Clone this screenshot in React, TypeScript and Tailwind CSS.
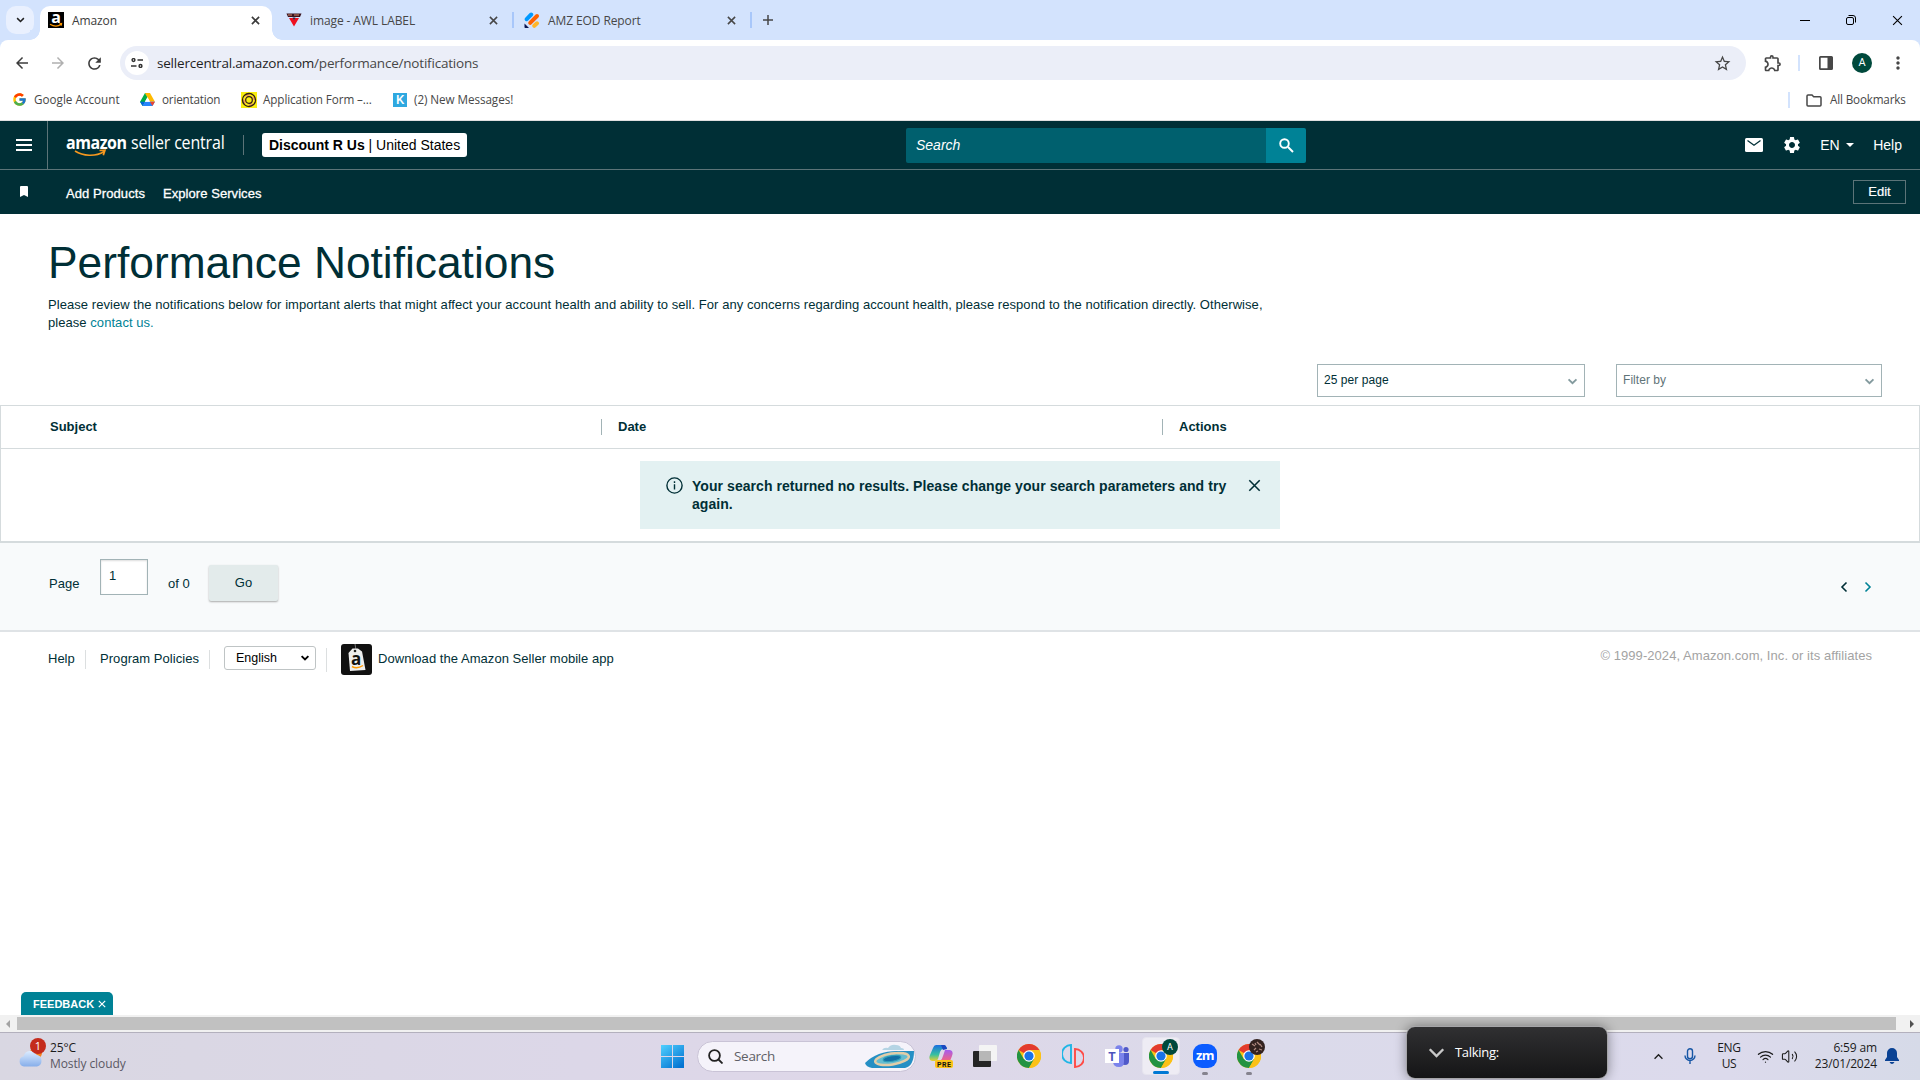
import React from "react";
import { FcGoogle } from "react-icons/fc";
import {
    MdArrowBack,
    MdArrowForward,
    MdRefresh,
    MdStarBorder,
    MdMoreVert,
    MdOutlineExtension,
    MdSettings,
} from "react-icons/md";
import { Volume2, Wifi } from "lucide-react";

interface TabItem {
    title: string;
    icon: React.ReactNode;
    className: string;
}

interface BookmarkItem {
    label: string;
    icon: React.ReactNode;
    className: string;
    textClass: string;
}

const Cross: React.FC<{ className?: string; width?: number }> = ({ className, width = 1.5 }) => (
    <svg viewBox="0 0 10 10" className={className} fill="none" stroke="currentColor" strokeWidth={width}>
        <path d="M1 1 9 9M9 1 1 9" />
    </svg>
);

const Chevron: React.FC<{ className?: string; width?: number }> = ({ className, width = 2 }) => (
    <svg viewBox="0 0 12 8" className={className} fill="none" stroke="currentColor" strokeWidth={width}>
        <path d="M1.5 1.5 6 6 10.5 1.5" />
    </svg>
);

const AmazonIcon = () => (
    <span className="relative flex h-4 w-4 justify-center bg-black font-['Open_Sans',sans-serif] text-[16px] leading-[10px] font-bold text-white">
        a
        <svg viewBox="0 0 16 16" className="absolute inset-0" fill="none" stroke="#f90" strokeWidth="1.3">
            <path d="M2 12.2c4 2.4 8 2.2 11 .3M11.5 11.8l2-.2-.3 2" />
        </svg>
    </span>
);

const AwlIcon = () => (
    <svg viewBox="0 0 16 16" className="h-4 w-4">
        <path d="M.5 1.5h15L14 5H2z" fill="#3a1420" />
        <path d="M2 3h4M8 3h5" stroke="#d98a6a" strokeWidth="1" />
        <path d="M3 6h4l1 2 1-2h4L8 14.5z" fill="#ef1020" />
        <path d="M6.5 5.5h3L8 8.5z" fill="#30203a" />
    </svg>
);

const JotformIcon = () => (
    <svg viewBox="0 0 16 16" className="h-4 w-4" strokeLinecap="round" strokeWidth="4">
        <path d="M2.7 7.2 7.2 2.5" stroke="#0099ff" />
        <path d="M6.2 10.8 13 4" stroke="#ff6100" />
        <path d="M10.3 13.8 13 11.3" stroke="#ffb629" />
        <path d="M.5 11.5v3.7q0 .8.8.8h3.7z" fill="#0a1551" />
    </svg>
);

const DriveIcon = () => (
    <svg viewBox="0 0 16 14" className="h-[13px] w-[15px]">
        <path d="M5.3 0h5.4L8 4.7z" fill="#188038" />
        <path d="M5.3 0 0 9.3 2.7 14 8 4.7z" fill="#00ac47" />
        <path d="M10.7 0 16 9.3h-5.4L5.3 0z" fill="#ffba00" />
        <path d="M5.3 9.3H16L13.3 14H2.7z" fill="#2684fc" />
        <path d="M10.7 9.3H16L13.3 14z" fill="#ea4335" />
        <path d="M5.3 9.3 2.7 14 0 9.3z" fill="#0066da" />
        <path d="M8 4.7 5.3 9.3h5.3z" fill="#fff" />
    </svg>
);

const FormIcon = () => (
    <svg viewBox="0 0 16 16" className="h-4 w-4">
        <path d="M0 0h16v16H0z" fill="#f8ee10" />
        <circle cx="8" cy="8" r="6.5" fill="#f0a850" stroke="#302010" strokeWidth="1.4" />
        <circle cx="8" cy="8" r="5" fill="none" stroke="#f8ee10" strokeWidth="1.6" strokeDasharray="4 3.85" />
        <circle cx="8" cy="8" r="3.3" fill="#f8ee10" stroke="#302010" strokeWidth="1.2" />
    </svg>
);

const ChromeIcon: React.FC<{ className?: string }> = ({ className = "h-6 w-6" }) => (
    <svg viewBox="0 0 24 24" className={className}>
        <circle cx="12" cy="12" r="12" fill="#fbc116" />
        <path d="M12 12 1.6 6A12 12 0 0 1 22.4 6z" fill="#e33b2e" />
        <path d="M12 12 6.8 15 1.6 6A12 12 0 0 0 12 24l5.2-9z" fill="#229342" />
        <path d="M12 6h10.4A12 12 0 0 1 12 24l5.2-9z" fill="#fbc116" />
        <circle cx="12" cy="12" r="5.8" fill="#fff" />
        <circle cx="12" cy="12" r="4.6" fill="#1a73e8" />
    </svg>
);

const tabs: TabItem[] = [
    { title: "image - AWL LABEL", icon: <AwlIcon />, className: "w-[241px] pl-[14px] pr-[14px]" },
    { title: "AMZ EOD Report", icon: <JotformIcon />, className: "w-[238px] pl-[11px] pr-[14px]" },
];

const bookmarks: BookmarkItem[] = [
    {
        label: "Google Account",
        icon: <FcGoogle className="h-[15px] w-[15px]" />,
        className: "w-[128px] gap-[7px]",
        textClass: "",
    },
    {
        label: "orientation",
        icon: <DriveIcon />,
        className: "w-[101px] gap-[7px]",
        textClass: "tracking-[-0.2px]",
    },
    {
        label: "Application Form –...",
        icon: <FormIcon />,
        className: "w-[152px] gap-[6px]",
        textClass: "tracking-[-0.1px]",
    },
    {
        label: "(2) New Messages!",
        icon: (
            <span className="flex h-[14px] w-[14px] items-center justify-center bg-[#2fa8e0] font-['Roboto',sans-serif] text-[13px] font-medium text-white">
                K
            </span>
        ),
        className: "gap-[7px]",
        textClass: "tracking-[-0.07px]",
    },
];

const TabStrip = () => (
    <div className="flex h-10 bg-[#d3e3fd] text-[12px] text-[#474747]">
        <div className="mt-[6px] ml-[6px] flex h-7 w-7 items-center justify-center rounded-[10px] bg-[#e9f0fe] text-[#1f1f1f]">
            <Chevron className="h-[6px] w-[9px]" />
        </div>
        <div className="relative mt-[6px] ml-[6px] flex h-[34px] w-[232px] items-center rounded-t-[10px] bg-white pb-[6px] pl-2 text-[#3c3c3c]">
            <AmazonIcon />
            <span className="ml-2 flex-1 pt-[2px] tracking-[-0.1px]">Amazon</span>
            <Cross className="mr-[12px] h-[9px] w-[9px]" width={1.8} />
            <span className="absolute bottom-0 -left-[10px] h-[10px] w-[10px] bg-[radial-gradient(circle_at_0_0,#d3e3fd_9.5px,white_10px)]" />
            <span className="absolute -right-[10px] bottom-0 h-[10px] w-[10px] bg-[radial-gradient(circle_at_100%_0,#d3e3fd_9.5px,white_10px)]" />
        </div>
        {tabs.map((tab) => (
            <div key={tab.title} className={`flex h-10 items-center ${tab.className}`}>
                {tab.icon}
                <span className="ml-2 flex-1 pt-[2px] tracking-[-0.1px]">{tab.title}</span>
                <Cross className="h-[9px] w-[9px]" width={1.7} />
                <span className="-mr-[15px] ml-[14px] h-4 w-[2px] bg-[#a8c7fa]" />
            </div>
        ))}
        <div className="flex h-10 w-8 items-center justify-center">
            <svg viewBox="0 0 10 10" className="ml-[2px] h-[10px] w-[10px]" stroke="currentColor" strokeWidth="1.5">
                <path d="M5 0v10M0 5h10" />
            </svg>
        </div>
        <div className="flex flex-1 items-center justify-end gap-[36px] pr-[17px] text-black">
            <span className="h-px w-[10px] bg-black" />
            <svg viewBox="0 0 10 10" className="h-[10px] w-[10px]" fill="none" stroke="currentColor">
                <rect x=".5" y="2.5" width="7" height="7" rx="1.5" />
                <path d="M2.5.5H7A2.5 2.5 0 0 1 9.5 3v4.5" />
            </svg>
            <Cross className="h-[11px] w-[11px]" width={1} />
        </div>
    </div>
);

const Toolbar = () => (
    <div className="bg-[#d3e3fd]">
        <div className="flex h-[41px] items-center rounded-t-[8px] bg-white pt-[5px] text-[#474747]">
            <MdArrowBack className="ml-[13px] h-[18px] w-[18px] text-[#3c3c3c]" />
            <MdArrowForward className="ml-[18px] h-[18px] w-[18px] text-[#b0b0b0]" />
            <MdRefresh className="ml-[18px] h-[19px] w-[19px] text-[#3c3c3c]" />
            <div className="ml-[16px] flex h-[34px] w-[1626px] items-center rounded-full bg-[#ebeef8] pl-[5px]">
                <span className="flex h-6 w-6 items-center justify-center rounded-full bg-white">
                    <svg viewBox="0 0 12 10" className="h-[10px] w-[12px]" fill="none" stroke="#333" strokeWidth="1.5">
                        <circle cx="2.5" cy="2" r="1.4" />
                        <path d="M6.5 2H12M0 8h5.5" />
                        <circle cx="9.5" cy="8" r="1.4" />
                    </svg>
                </span>
                <span className="ml-2 flex-1 text-[13.5px] tracking-[-0.2px]">
                    <span className="text-[#1f1f1f]">sellercentral.amazon.com</span>/performance/notifications
                </span>
                <MdStarBorder className="mr-[14px] h-[19px] w-[19px]" />
            </div>
            <MdOutlineExtension className="ml-[17px] h-[20px] w-[20px]" />
            <span className="ml-[15px] h-4 w-[2px] bg-[#d3e3fd]" />
            <svg viewBox="0 0 14 14" className="ml-[19px] h-[14px] w-[14px]">
                <path d="M0 1.5Q0 0 1.5 0h11Q14 0 14 1.5v11q0 1.5-1.5 1.5h-11Q0 14 0 12.5zM1.7 1.7v10.6h6.8V1.7z" fill="#474747" />
            </svg>
            <span className="ml-[19px] flex h-5 w-5 items-center justify-center rounded-full bg-[#00493c] font-['Roboto',sans-serif] text-[11px] text-white">
                A
            </span>
            <MdMoreVert className="ml-[16px] h-5 w-5" />
        </div>
    </div>
);

const Bookmarks = () => (
    <div className="flex h-10 items-center border-b border-[#e0e0e0] bg-white pb-px pl-[12px] text-[11.7px] text-[#474747]">
        {bookmarks.map((item) => (
            <div key={item.label} className={`flex items-center whitespace-nowrap ${item.className}`}>
                {item.icon}
                <span className={item.textClass}>{item.label}</span>
            </div>
        ))}
        <span className="ml-auto h-4 w-[2px] bg-[#d3e3fd]" />
        <svg viewBox="0 0 16 13" className="ml-[16px] h-[13px] w-[16px]" fill="none" stroke="#474747" strokeWidth="1.5">
            <path d="M1 2q0-1 1-1h4l1.7 1.7H14q1 0 1 1V11q0 1-1 1H2q-1 0-1-1z" />
        </svg>
        <span className="ml-2 w-[90px] tracking-[-0.17px]">All Bookmarks</span>
    </div>
);

const SellerHeader = () => (
    <header className="bg-[#002f36] text-[14px] text-white">
        <div className="flex h-[49px] items-center border-b border-[#5c7478]">
            <div className="flex h-12 w-12 flex-col justify-center gap-[2px] border-r border-[#5c7478] pl-4">
                <span className="h-[2px] w-4 bg-white" />
                <span className="my-px h-[2px] w-4 bg-white" />
                <span className="h-[2px] w-4 bg-white" />
            </div>
            <div className="relative ml-[18px] flex h-12 w-[177px] items-center font-['Open_Sans',sans-serif] text-[18px]">
                <span className="-mt-[5px] w-[65px] origin-left scale-x-[0.889] font-bold tracking-[-0.5px]">amazon</span>
                <span className="-mt-[5px] origin-left scale-x-[0.889] tracking-[-0.2px] whitespace-nowrap">
                    seller central
                </span>
                <svg viewBox="0 0 34 8" className="absolute top-[28px] left-[8px] h-[8px] w-[34px]" fill="none" stroke="#f7981f" strokeWidth="1.7">
                    <path d="M1 2c8 5 20 6 29 .8M25.5 1.5l5.500-.3-1.700 5" />
                </svg>
            </div>
            <span className="h-5 w-px bg-[#5c7478]" />
            <div className="ml-[18px] flex h-6 w-[205px] items-center rounded-[3px] bg-white pl-[7px] whitespace-pre text-black">
                <b>Discount R Us</b> | United States
            </div>
            <div className="ml-[439px] flex h-[35px] w-[400px]">
                <span className="flex w-[360px] items-center rounded-l-[2px] bg-[#00606e] pl-[10px] italic">Search</span>
                <span className="flex w-[40px] items-center justify-center rounded-r-[2px] bg-[#008296]">
                    <svg viewBox="0 0 15 15" className="h-[15px] w-[15px]" fill="none" stroke="#fff" strokeWidth="1.9">
                        <circle cx="5.5" cy="5.5" r="4.3" />
                        <path d="m9 9 5 5" />
                    </svg>
                </span>
            </div>
            <div className="ml-auto flex items-center pr-[18px]">
                <svg viewBox="0 0 18 14" className="h-[14px] w-[18px]">
                    <rect width="18" height="14" rx="1.5" fill="#fff" />
                    <path d="m2.5 2.5 6.5 4.7 6.5-4.7" fill="none" stroke="#002f36" strokeWidth="1.3" />
                </svg>
                <MdSettings className="ml-[19px] h-5 w-5" />
                <span className="ml-[18px] w-[26px]">EN</span>
                <svg viewBox="0 0 8 4" className="h-1 w-2" fill="#fff">
                    <path d="M0 0h8L4 4z" />
                </svg>
                <span className="ml-[19px]">Help</span>
            </div>
        </div>
        <div className="flex h-[44px] items-center pr-[14px] text-[13px]">
            <svg viewBox="0 0 8 11" className="-mt-[1px] ml-5 h-[11px] w-2" fill="#fff">
                <path d="M0 1q0-1 1-1h6q1 0 1 1v10L4 9 0 11z" />
            </svg>
            <span className="ml-[38px] w-[97px] pt-[3px] tracking-[0.08px] [-webkit-text-stroke:0.3px]">Add Products</span>
            <span className="pt-[3px] tracking-[0.06px] [-webkit-text-stroke:0.3px]">Explore Services</span>
            <span className="ml-auto flex h-6 w-[53px] items-center justify-center border border-[#5c7478] pb-px [-webkit-text-stroke:0.2px]">
                Edit
            </span>
        </div>
    </header>
);

const SelectBox: React.FC<{ label: string; className: string }> = ({ label, className }) => (
    <div className={`flex h-[33px] items-center justify-between border border-[#a2b3b6] bg-white pr-[6px] pl-[6px] text-[12px] ${className}`}>
        <span className="-mt-[2px] tracking-[0.05px]">{label}</span>
        <Chevron className="mt-[2px] h-[7px] w-[11px] text-[#839a9e]" width={2.1} />
    </div>
);

const Notifications = () => (
    <main className="bg-white text-[13px] text-[#002f36]">
        <div className="h-[150px] pt-[22px] pl-12">
            <h1 className="text-[44.3px] leading-[54px]">Performance Notifications</h1>
            <p className="mt-[6px] leading-[18px] tracking-[0.055px] whitespace-nowrap">
                Please review the notifications below for important alerts that might affect your account health and
                ability to sell. For any concerns regarding account health, please respond to the notification directly.
                Otherwise,
                <br />
                please <a className="text-[#008296]">contact us.</a>
            </p>
        </div>
        <div className="flex h-[41px] justify-end gap-[31px] pr-[38px]">
            <SelectBox label="25 per page" className="w-[268px]" />
            <SelectBox label="Filter by" className="w-[266px] text-[#5f7478]" />
        </div>
        <div className="h-[138px] border-x border-t border-b-2 border-[#d5dbdd]">
            <div className="flex h-[43px] items-center border-b border-[#d5dbdd] font-bold">
                <span className="w-[600px] pl-[49px]">Subject</span>
                <span className="h-4 w-px bg-[#a2b3b6]" />
                <span className="w-[560px] pl-4">Date</span>
                <span className="h-4 w-px bg-[#a2b3b6]" />
                <span className="pl-4">Actions</span>
            </div>
            <div className="mx-auto mt-3 flex h-[68px] w-[640px] bg-[#e3f1f2] pt-4 text-[14px] leading-[18px] font-bold">
                <svg viewBox="0 0 17 17" className="ml-[26px] h-[17px] w-[17px]" fill="none" stroke="currentColor" strokeWidth="1.4">
                    <circle cx="8.5" cy="8.5" r="7.6" />
                    <path d="M8.5 7.3v5.2M8.5 4.3v1.6" />
                </svg>
                <p className="ml-[9px] w-[546px] tracking-[0.06px] whitespace-nowrap">
                    Your search returned no results. Please change your search parameters and try
                    <br />
                    again.
                </p>
                <Cross className="mt-[2px] ml-[10px] h-[13px] w-[13px]" width={1.2} />
            </div>
        </div>
        <div className="flex h-[89px] border-b-2 border-[#dfe3e6] bg-[#f8fafb]">
            <span className="mt-[31px] ml-[49px] w-[51px]">Page</span>
            <span className="mt-4 h-9 w-12 border border-[#a2b3b6] bg-white pt-[6px] pl-2 shadow-[inset_0_1px_2px_#ddd]">1</span>
            <span className="mt-[31px] ml-5 w-[41px]">of 0</span>
            <span className="mt-[22px] flex h-9 w-[69px] items-center justify-center rounded-[2px] bg-[#e3ebeb] shadow-[0_1px_2px_#aaa]">
                Go
            </span>
            <span className="mt-[40px] mr-[46px] ml-auto flex h-[8px] gap-[12px]">
                <Chevron className="h-[8px] w-3 rotate-90 text-[#002f36]" width={1.6} />
                <Chevron className="h-[8px] w-3 -rotate-90 text-[#008296]" width={1.6} />
            </span>
        </div>
    </main>
);

const Footer = () => (
    <footer className="flex h-[383px] items-start bg-white pt-3 text-[13px] text-[#002f36]">
        <div className="flex h-[31px] items-center pl-12">
            <span className="-mt-[2px] w-[37px]">Help</span>
            <span className="h-[19px] w-px bg-[#dcdfe0]" />
            <span className="-mt-[2px] w-[123px] pl-[14px] tracking-[0.05px] whitespace-nowrap">Program Policies</span>
            <span className="h-[19px] w-px bg-[#dcdfe0]" />
            <span className="-mt-[3px] ml-[14px] flex h-6 w-[92px] items-center justify-between rounded-[3px] border border-[#bfc4c5] pr-[5px] pl-[11px] text-[12.5px] text-black">
                English
                <Chevron className="h-[6px] w-[10px]" width={2.5} />
            </span>
            <span className="ml-[10px] h-6 w-px bg-[#dcdfe0]" />
            <svg viewBox="0 0 31 31" className="ml-[14px] h-[31px] w-[31px]">
                <rect width="31" height="31" rx="3" fill="#111" />
                <path d="m14 0 1 6" stroke="#777" />
                <path d="m7.5 9 4-4.5h5.5l4 3L24.5 26l-15.5 1z" fill="#eee" />
                <circle cx="14" cy="7" r="1.3" fill="#222" />
                <text x="10" y="20.5" fontSize="17" fontWeight="bold" fill="#111" fontFamily="Open Sans, sans-serif">
                    a
                </text>
                <path d="M11 22.5q5 3 11-1" fill="none" stroke="#f90" strokeWidth="1.5" />
            </svg>
            <span className="-mt-[2px] ml-[6px] tracking-[0.045px]">Download the Amazon Seller mobile app</span>
        </div>
        <span className="mt-[2px] mr-12 ml-auto tracking-[0.06px] text-[#a3a3a3]">
            © 1999-2024, Amazon.com, Inc. or its affiliates
        </span>
    </footer>
);

const Scrollbar = () => (
    <div className="flex h-[17px] items-center bg-[#f1f1f1]">
        <svg viewBox="0 0 4 8" className="ml-[6px] h-2 w-1" fill="#a3a3a3">
            <path d="M4 0v8L0 4z" />
        </svg>
        <span className="ml-[7px] h-[13px] w-[1879px] bg-[#c1c1c1]" />
        <svg viewBox="0 0 4 8" className="ml-[14px] h-2 w-1" fill="#505050">
            <path d="M0 0v8l4-4z" />
        </svg>
    </div>
);

const Taskbar = () => (
    <div className="flex h-12 items-center border-t border-[#b3b0bd] bg-[linear-gradient(90deg,#d9d7e2_0%,#dcd7e8_30%,#ded7e8_45%,#dbdaea_65%,#dcdaec_90%,#d6dae8_100%)] pb-px text-[12px] leading-4 text-[#1b1b1b]">
        <div className="relative ml-[18px] h-10 w-8">
            <svg viewBox="0 0 28 30" className="mt-[4px] h-[30px] w-7">
                <defs>
                    <linearGradient id="cloud" x2="0" y2="1">
                        <stop stopColor="#dcecff" />
                        <stop offset="1" stopColor="#86aeea" />
                    </linearGradient>
                </defs>
                <circle cx="18" cy="13" r="6" fill="#f58220" />
                <path d="M6 26.5a5.2 5.2 0 0 1-.4-10.2 7 7 0 0 1 13-1.5 6 6 0 0 1 .4 11.700z" fill="url(#cloud)" />
            </svg>
            <span className="absolute top-[2px] left-[12px] flex h-4 w-4 items-center justify-center rounded-full bg-[#c42b1c] text-[11px] text-white">
                1
            </span>
        </div>
        <div className="w-[611px] pb-px tracking-[-0.1px]">
            <div>25°C</div>
            <div className="text-[#5a5864]">Mostly cloudy</div>
        </div>
        <svg viewBox="0 0 23 23" className="h-[23px] w-[23px]">
            <defs>
                <linearGradient id="win" gradientUnits="userSpaceOnUse" x2="18" y2="23">
                    <stop stopColor="#50d0ff" />
                    <stop offset="1" stopColor="#0474d2" />
                </linearGradient>
            </defs>
            <path d="M0 0h11v11H0zM12 0h11v11H12zM0 12h11v11H0zM12 12h11v11H12z" fill="url(#win)" />
        </svg>
        <div className="ml-[13px] flex h-[31px] w-[219px] items-center rounded-full border border-[#c9c3d6] bg-[#f5f3fa] pl-[10px]">
            <svg viewBox="0 0 15 15" className="h-[15px] w-[15px]" fill="none" stroke="#222" strokeWidth="1.8">
                <circle cx="6.5" cy="6.5" r="5.4" />
                <path d="m10.5 10.5 4 4" />
            </svg>
            <span className="ml-[11px] flex-1 text-[13.5px] tracking-[-0.3px] text-[#5f5f66]">Search</span>
            <svg viewBox="0 0 49 25" className="mr-[1px] h-[25px] w-[49px]">
                <path d="M17 6q2-3 6-2 3-4 8-3 4 0 5 3 3 0 3 2z" fill="#b4d4e4" />
                <path d="M0 19Q12 7 32 7h17q0 15-9 17H7q-6-1-7-5z" fill="#258fc4" />
                <ellipse cx="27" cy="15" rx="17" ry="5.5" fill="#66bdd0" stroke="#e2cda8" strokeWidth="2.5" transform="rotate(-9 27 15)" />
                <ellipse cx="27" cy="14.5" rx="9" ry="2.8" fill="#146fa4" stroke="#2f9cb8" transform="rotate(-9 27 14.5)" />
            </svg>
        </div>
        <svg viewBox="0 0 24 24" className="ml-[13px] h-6 w-6">
            <defs>
                <linearGradient id="cpl" x2="0" y2="1">
                    <stop stopColor="#1a6fe0" />
                    <stop offset=".6" stopColor="#37c0a0" />
                    <stop offset="1" stopColor="#e8d030" />
                </linearGradient>
                <linearGradient id="cpr" x2="0" y2="1">
                    <stop stopColor="#a45cf0" />
                    <stop offset="1" stopColor="#f5657c" />
                </linearGradient>
            </defs>
            <path d="M7 1h8q2 0 3 4h-4q-2 0-3 3l-2 7q-1 2-3 2H3q-4-1-2-6l3-7q1-3 3-3z" fill="url(#cpl)" />
            <path d="M12 1h3q2 0 3 4l-4 1z" fill="#1b48c0" />
            <path d="M16 6h5q4 1 2 6l-2 5h-10q2-1 3-5z" fill="url(#cpr)" />
            <rect x="6" y="16" width="18" height="8" rx="2" fill="#fcc419" />
            <text x="8" y="22.5" fontSize="7" fontWeight="bold" fill="#111" fontFamily="Roboto, sans-serif" textLength="14">
                PRE
            </text>
        </svg>
        <svg viewBox="0 0 24 22" className="ml-[20px] h-[22px] w-6">
            <rect y="6" width="18" height="16" rx="1" fill="#252525" />
            <rect x="6" width="18" height="16" rx="1" fill="#f4f4f4" />
            <path d="M6 6h12v10H6z" fill="#b7b7b7" />
        </svg>
        <ChromeIcon className="ml-5 h-6 w-6" />
        <svg viewBox="0 0 22 24" className="ml-[21px] h-6 w-[22px]" fill="none" strokeWidth="1.9">
            <path d="M9 1v18A9 9 0 0 1 9 1z" stroke="#1fb6e6" />
            <path d="M13 5v18a9 9 0 0 0 0-18z" stroke="#ff4b45" />
        </svg>
        <svg viewBox="0 0 25 23" className="ml-[21px] h-[23px] w-[25px]">
            <circle cx="14" cy="4" r="3.7" fill="#7b83eb" />
            <circle cx="21" cy="4.5" r="2.6" fill="#5059c9" />
            <path d="M15 8h9v8q0 4-4 4t-5-4z" fill="#5059c9" />
            <path d="M8 8h11v9q0 5-5 5-6 0-6-6z" fill="#7b83eb" />
            <path d="M0 4h14v14H0z" fill="#fff" />
            <text x="3.2" y="15.5" fontSize="12" fontWeight="bold" fill="#4b53bc" fontFamily="Roboto, sans-serif">
                T
            </text>
        </svg>
        <div className="relative ml-[12px] flex h-[38px] w-[38px] items-center justify-center rounded-[4px] border border-[#e6e4ee] bg-[#eeecf4]">
            <ChromeIcon />
            <span className="absolute top-[1px] left-[19px] flex h-4 w-4 items-center justify-center rounded-full bg-[#00493c] font-['Roboto',sans-serif] text-[9px] text-white">
                A
            </span>
            <span className="absolute bottom-0 left-[10px] h-[3px] w-4 rounded-full bg-[#0078d4]" />
        </div>
        <div className="relative ml-[13px] flex h-6 w-6 items-center justify-center rounded-[9px] bg-[#0b5cff] pb-[2px] font-['Open_Sans',sans-serif] text-[13px] font-bold tracking-[-0.5px] text-white">
            zm
            <span className="absolute -bottom-[7px] left-[9px] h-[3px] w-[6px] rounded-full bg-[#85838e]" />
        </div>
        <div className="relative ml-[20px] h-6 w-6">
            <ChromeIcon />
            <svg viewBox="0 0 16 16" className="absolute -top-[5px] left-[12px] h-4 w-4">
                <circle cx="8" cy="8" r="8" fill="#33221f" />
                <path d="M3 5l3 2M8 3l3 3M5 11l2-2M10 10l3 1M11 5l2 3M7 13l2-1M6 4l1 2" stroke="#b08a80" strokeWidth="1.2" />
            </svg>
            <span className="absolute -bottom-[7px] left-[9px] h-[3px] w-[6px] rounded-full bg-[#85838e]" />
        </div>
        <div className="flex flex-1 items-center justify-end pr-[21px]">
            <Chevron className="h-[7px] w-[11px] rotate-180" width={1.5} />
            <svg viewBox="0 0 12 16" className="ml-[20px] h-4 w-3" fill="none" stroke="#1756a5" strokeWidth="1.4">
                <rect x="3.5" y=".8" width="5" height="10" rx="2.5" />
                <path d="M1 7.5a5 5 0 0 0 10 0M6 12.5V16" />
            </svg>
            <div className="mr-[-1px] ml-[18px] w-[30px] text-center leading-4 tracking-[-0.3px]">
                <div>ENG</div>
                <div>US</div>
            </div>
            <Wifi className="ml-[14px] h-[17px] w-[17px]" strokeWidth={1.7} />
            <Volume2 className="ml-[7px] h-[17px] w-[17px]" strokeWidth={1.5} />
            <div className="ml-[11px] w-[68px] text-right tracking-[-0.15px]">
                <div>6:59 am</div>
                <div>23/01/2024</div>
            </div>
            <svg viewBox="0 0 14 16" className="ml-2 h-4 w-[14px]" fill="#0a4294">
                <path d="M7 0a5 5 0 0 1 5 5v4l2 3v1H0v-1l2-3V5a5 5 0 0 1 5-5zM4.5 14h5q-1 2-2.5 2t-2.5-2z" />
            </svg>
        </div>
    </div>
);

const App: React.FC = () => {
    return (
        <div className="relative flex h-[1080px] w-[1920px] flex-col overflow-hidden bg-white font-['Liberation_Sans',Arial,sans-serif]">
            <div className="font-['Open_Sans',sans-serif]">
                <TabStrip />
                <Toolbar />
                <Bookmarks />
            </div>
            <SellerHeader />
            <Notifications />
            <Footer />
            <Scrollbar />
            <div className="font-['Open_Sans',sans-serif]">
                <Taskbar />
            </div>

            {/* Feedback tab, pinned above the scrollbar */}
            <div className="absolute top-[992px] left-[21px] flex h-[23px] w-[92px] items-center rounded-t-[5px] bg-[#008296] pt-px pl-3 text-[11px] font-bold text-white">
                <span className="w-[65px]">FEEDBACK</span>
                <Cross className="h-2 w-2" />
            </div>

            {/* Meeting toast, floats over the taskbar */}
            <div className="absolute top-[1026px] left-[1406px] flex h-[53px] w-[202px] items-center rounded-[9px] border border-[#a5a5a8] bg-[linear-gradient(#303032,#151516)] pl-5 font-['Open_Sans',sans-serif] text-[13px] text-white shadow-[0_0_12px_rgba(0,0,0,0.4)]">
                <Chevron className="mt-px h-3 w-[19px] text-[#c8c8c8]" width={1.6} />
                <span className="ml-[9px] pt-px tracking-[-0.3px]">Talking:</span>
            </div>
        </div>
    );
};

export default App;
